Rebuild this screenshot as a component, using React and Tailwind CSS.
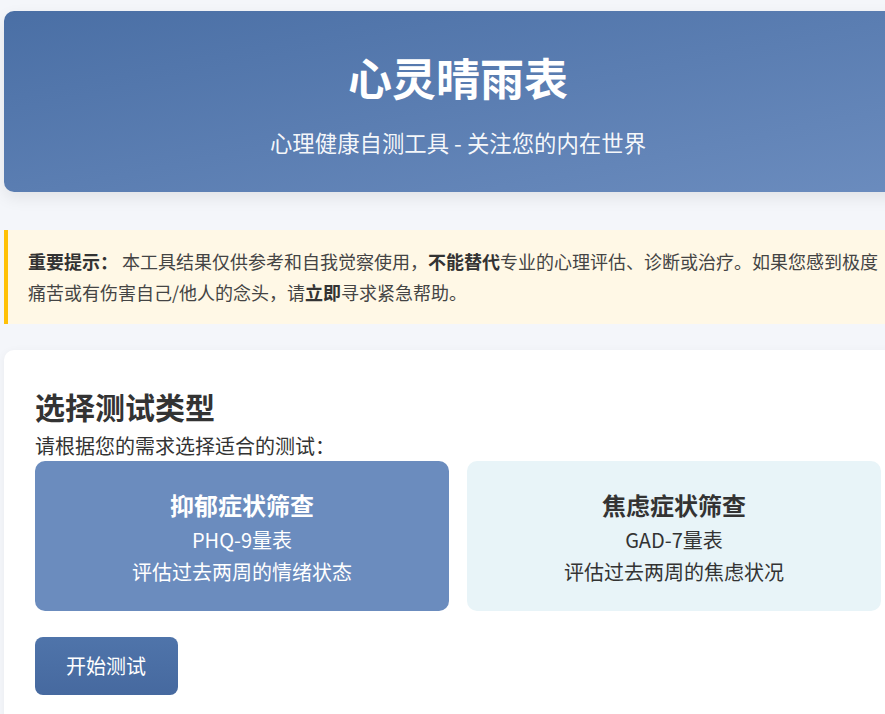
import React, { useState } from 'react';

const TESTS = [
  { id: 'phq9', title: '抑郁症状筛查', scale: 'PHQ-9量表', desc: '评估过去两周的情绪状态' },
  { id: 'gad7', title: '焦虑症状筛查', scale: 'GAD-7量表', desc: '评估过去两周的焦虑状况' }
];

const App = () => {
  const [selected, setSelected] = useState('phq9');

  return (
    <div
      className="min-h-screen w-full overflow-hidden bg-[#f4f6fa] text-[#333]"
      style={{ fontFamily: '"Noto Sans CJK SC", "Noto Sans", sans-serif' }}
    >
      <div className="ml-[4px] w-[908px] pt-[11px]">
        <header className="rounded-[10px] bg-gradient-to-br from-[#4a6fa5] to-[#6b8cbe] pt-[40px] pb-[33px] text-center text-white shadow-[0_6px_16px_rgba(0,0,0,0.08)]">
          <h1 className="text-[44px] font-bold leading-[1.2]">心灵晴雨表</h1>
          <p className="mt-[22px] text-[22.4px] leading-[33px] text-white/95">心理健康自测工具 - 关注您的内在世界</p>
        </header>

        <div className="mt-[38px] border-l-4 border-[#ffc107] bg-[#fff8e6] px-5 py-4 text-[18px] leading-[31px] text-[#444]">
          <strong className="font-bold text-[#333]">重要提示：</strong> 本工具结果仅供参考和自我觉察使用，<strong className="font-bold text-[#333]">不能替代</strong>专业的心理评估、诊断或治疗。如果您感到极度痛苦或有伤害自己/他人的念头，请<strong className="font-bold text-[#333]">立即</strong>寻求紧急帮助。
        </div>

        <section className="mt-[26px] rounded-[10px] bg-white px-[31px] pt-[38px] pb-[30px] shadow-[0_2px_10px_rgba(0,0,0,0.05)]">
          <h2 className="text-[30px] font-bold leading-[36px] text-[#333]">选择测试类型</h2>
          <p className="mt-[7px] text-[20px] leading-[30px] text-[#333]">请根据您的需求选择适合的测试：</p>

          <div className="grid grid-cols-2 gap-[18px]">
            {TESTS.map((test) => {
              const active = selected === test.id;
              return (
                <div
                  key={test.id}
                  onClick={() => setSelected(test.id)}
                  className={
                    active
                      ? 'cursor-pointer rounded-[10px] bg-[#6b8cbe] pt-[25px] pb-[23px] text-center text-white'
                      : 'cursor-pointer rounded-[10px] bg-[#e8f4f8] pt-[25px] pb-[23px] text-center text-[#333]'
                  }
                >
                  <h3 className="text-[24px] font-bold leading-[38px]">{test.title}</h3>
                  <p className="text-[20px] leading-[32px]">{test.scale}</p>
                  <p className="text-[20px] leading-[32px]">{test.desc}</p>
                </div>
              );
            })}
          </div>

          <button className="mt-[26px] rounded-[8px] bg-gradient-to-b from-[#4f74aa] to-[#46699f] pl-[31px] pr-[32px] py-[13px] text-[20px] leading-[32px] text-white">
            开始测试
          </button>
        </section>
      </div>
    </div>
  );
};

export default App;
